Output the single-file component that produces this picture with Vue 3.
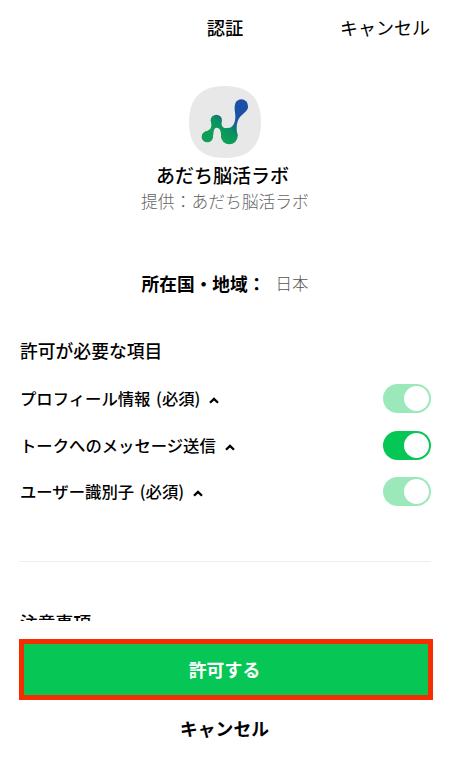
<script setup>
import { ref } from 'vue'

const permissions = ref([
  { label: 'プロフィール情報 (必須)', required: true },
  { label: 'トークへのメッセージ送信', required: false },
  { label: 'ユーザー識別子 (必須)', required: true },
])
</script>

<template>
  <div class="screen">
    <header class="bar">
      <span class="bar-title">認証</span>
      <span class="bar-cancel">キャンセル</span>
    </header>

    <main class="content">
      <section class="app">
        <svg class="logo" viewBox="0 0 216 216">
          <defs>
            <linearGradient id="mark" gradientUnits="userSpaceOnUse" x1="110" y1="160" x2="152" y2="105">
              <stop offset="0" stop-color="#0c9f55" />
              <stop offset="0.42" stop-color="#0a9160" />
              <stop offset="0.68" stop-color="#126e80" />
              <stop offset="1" stop-color="#1a50a6" />
            </linearGradient>
          </defs>
          <path d="M108 0C180 0 216 36 216 108S180 216 108 216 0 180 0 108 36 0 108 0Z" fill="#e8e8e8" />
          <g fill="url(#mark)">
            <circle cx="55" cy="152" r="17" />
            <circle cx="82" cy="103" r="17" />
            <circle cx="121" cy="150" r="25" />
            <circle cx="157" cy="60" r="20" />
            <path d="M50 136C62 134 70 126 66 109L98 109C96 122 104 128 116 127C132 125 138 110 139 95C140 84 136 75 137 62L177 62C175 78 157 84 149 99C143 110 141 128 146 150L97 157C97 139 94 125 83 125C72 126 75 140 71 156L55 160Z" />
          </g>
        </svg>
        <h1 class="app-name">あだち脳活ラボ</h1>
        <p class="provider">提供：あだち脳活ラボ</p>
      </section>

      <p class="region"><b>所在国・地域：</b><span>日本</span></p>

      <section class="permissions">
        <h2 class="heading">許可が必要な項目</h2>
        <div v-for="item in permissions" :key="item.label" class="row">
          <span class="label">{{ item.label }}</span>
          <svg class="caret" viewBox="0 0 10 7"><path d="M1 5.8L5 1.9L9 5.8" /></svg>
          <span class="toggle" :class="{ locked: item.required }"></span>
        </div>
      </section>

      <section class="notes">
        <h2 class="heading">注意事項</h2>
      </section>
    </main>

    <footer class="actions">
      <button class="allow">許可する</button>
      <button class="cancel">キャンセル</button>
    </footer>
  </div>
</template>

<style>
body {
  margin: 0;
  background: #fff;
}
</style>

<style scoped>
.screen {
  width: 450px;
  height: 778px;
  display: flex;
  flex-direction: column;
  overflow: hidden;
  background: #fff;
  color: #000;
  font-family: "Noto Sans CJK JP", sans-serif;
}
.screen * {
  box-sizing: border-box;
}
h1, h2, p {
  margin: 0;
}
.bar {
  height: 56px;
  flex: none;
  display: grid;
  grid-template-columns: 1fr auto 1fr;
  align-items: center;
  padding: 0 20px 2px;
  font-size: 18px;
  line-height: 28px;
}
.bar-title {
  grid-column: 2;
  font-weight: 500;
  font-size: 18.3px;
}
.bar-cancel {
  justify-self: end;
}
.content {
  height: 565px;
  flex: none;
  overflow: hidden;
  padding: 30px 19px 0;
}
.app {
  display: flex;
  flex-direction: column;
  align-items: center;
}
.logo {
  width: 72px;
  height: 72px;
}
.app-name {
  margin-top: 3px;
  padding-right: 5px;
  font-size: 19px;
  line-height: 28px;
  font-weight: 500;
}
.provider {
  font-size: 16.8px;
  line-height: 24px;
  font-weight: 300;
  color: #666;
}
.region {
  display: flex;
  justify-content: center;
  align-items: center;
  height: 28px;
  margin-top: 56px;
  gap: 10px;
}
.region b {
  font-size: 17.7px;
  font-weight: 700;
}
.region span {
  font-size: 16.5px;
  font-weight: 300;
  color: #555;
}
.permissions {
  height: 265px;
  padding-top: 39px;
  border-bottom: 1px solid #eee;
}
.heading {
  padding-left: 1px;
  font-size: 17.8px;
  line-height: 28px;
  font-weight: 500;
}
.permissions .heading {
  margin-bottom: 11px;
}
.row {
  display: flex;
  align-items: center;
  height: 46.8px;
}
.label {
  padding-left: 1px;
  margin-top: -1px;
  font-size: 16.35px;
  font-weight: 500;
  word-spacing: 2px;
}
.caret {
  width: 10px;
  height: 7px;
  margin-left: 9px;
  margin-top: 4px;
  fill: none;
  stroke: #000;
  stroke-width: 2.3;
}
.toggle {
  width: 48px;
  height: 29px;
  margin-left: auto;
  border-radius: 15px;
  background: #06c755;
  display: flex;
  align-items: center;
  justify-content: flex-end;
  padding-right: 2px;
}
.toggle::before {
  content: "";
  width: 25px;
  height: 25px;
  border-radius: 50%;
  background: #fff;
}
.toggle.locked {
  background: #9be9bb;
}
.notes {
  padding-top: 46px;
}
.actions {
  display: flex;
  flex-direction: column;
  padding: 18px 17px 0 19px;
}
button {
  font-family: inherit;
  padding: 0;
  border: 0;
  background: none;
}
.allow {
  height: 61px;
  border: 5px solid #f62d00;
  background: #06c755;
  color: #fff;
  font-size: 17.9px;
  font-weight: 700;
  padding: 0 3px 1px 0;
}
.cancel {
  height: 57px;
  font-size: 17.8px;
  font-weight: 700;
  color: #000;
  padding: 0 3px 2px 0;
}
</style>
